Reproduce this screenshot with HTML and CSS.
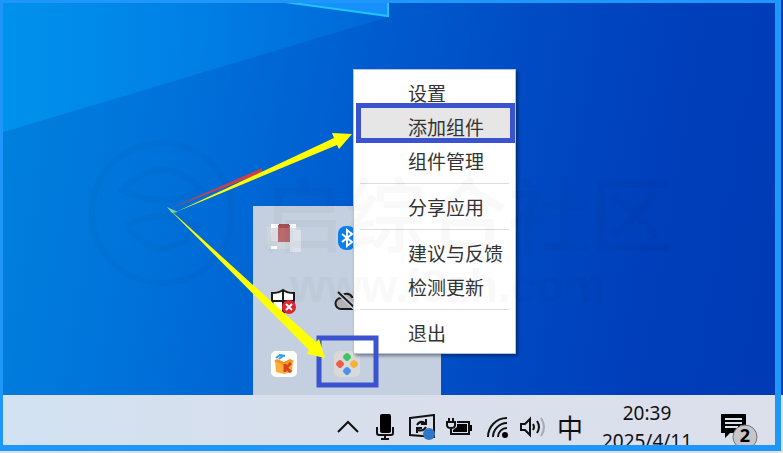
FILE: index.html
```
<!DOCTYPE html>
<html lang="zh-CN">

<head>
    <meta charset="utf-8">
    <meta name="viewport" content="width=device-width, initial-scale=1.0">
    <title>桌面</title>
    <link rel="stylesheet" href="styles.css">
</head>

<body>
    <main class="desktop">
        <svg class="wallpaper" viewBox="0 0 783 395" preserveAspectRatio="none" aria-hidden="true">
            <defs>
                <linearGradient id="beam" x1="0" y1="0" x2="1" y2="0">
                    <stop offset="0" stop-color="#0094ee" stop-opacity="0.9" />
                    <stop offset="0.5" stop-color="#0086ea" stop-opacity="0.7" />
                    <stop offset="1" stop-color="#0070e0" stop-opacity="0.5" />
                </linearGradient>
            </defs>
            <path d="M0 0H388V17L0 133Z" fill="url(#beam)" />
            <path d="M270 0L388 16V0Z" fill="#1690fb" />
            <path d="M270 0L388 16V0" fill="none" stroke="#20c4fb" stroke-width="2" />
        </svg>

        <div class="flyout">
            <button aria-label="应用">
                <svg width="36" height="32" viewBox="0 0 36 32">
                    <path d="M1 5h33v22H1z" fill="#cfd5df" />
                    <path d="M5 2h25v4H5z" fill="#fff" />
                    <path d="M5 6h8v13H5zM24 6h6v20h-6z" fill="#dde1e9" />
                    <path d="M12 3h12v17H12z" fill="#b96b6e" />
                    <path d="M13 2h10v4H13z" fill="#a84d53" />
                    <path d="M24 8h11v22H24z" fill="#dce2ec" />
                    <path d="M5 24h6v3H5z" fill="#fff" />
                </svg>
            </button>
            <button aria-label="蓝牙">
                <svg width="18" height="24" viewBox="0 0 18 24">
                    <rect width="18" height="24" rx="8" fill="#0a7fec" />
                    <path d="M4 8l10 8-5 4V4l5 4-10 8" fill="none" stroke="#fff" stroke-width="2" />
                </svg>
            </button>
            <button></button>
            <button aria-label="安全中心">
                <svg width="26" height="26" viewBox="0 0 26 26">
                    <path d="M12 2C9 4 5 5 1 5V12C1 18 5 22 12 25C19 22 23 18 23 12V5C19 5 15 4 12 2Z" fill="#fff" stroke="#1a1a1a" stroke-width="2" />
                    <path d="M12 2V25M1 13H23" stroke="#1a1a1a" stroke-width="2" />
                    <circle cx="18" cy="19" r="7" fill="#e02430" />
                    <path d="M15 16l6 6m0-6l-6 6" stroke="#fff" stroke-width="2" />
                </svg>
            </button>
            <button aria-label="云同步">
                <svg width="26" height="22" viewBox="0 0 26 22">
                    <path d="M7 19a5 5 0 0 1 0-11 6 6 0 0 1 11-1 6 6 0 0 1 2 12z" fill="#b3b3b3" stroke="#1a1a1a" stroke-width="2" />
                    <path d="M4 2l18 17" stroke="#c4cedd" stroke-width="5" />
                    <path d="M4 2l18 17" stroke="#1a1a1a" stroke-width="2" />
                </svg>
            </button>
            <button></button>
            <button aria-label="酷狗">
                <svg width="26" height="26" viewBox="0 0 26 26">
                    <rect width="26" height="26" rx="5" fill="#fff" />
                    <path d="M4 10l9 3 9-3-1 11-8 2-8-2z" fill="#fbb03c" />
                    <path d="M3 10l3-2 7 3 6-3 4 2-10 4z" fill="#f7941e" />
                    <path d="M5 7l4-3 5 1M8 8l5-4" fill="none" stroke="#2f9de4" stroke-width="2" />
                    <path d="M14 13v8M20 12l-5 5 5 4" fill="none" stroke="#d9431f" stroke-width="3" />
                </svg>
            </button>
            <button aria-label="小组件">
                <svg width="26" height="26" viewBox="0 0 26 26">
                    <rect width="26" height="26" rx="5" fill="#d9d9d9" />
                    <g stroke-linejoin="round" stroke-width="4">
                        <path d="M13 4l2 2-2 2-2-2z" fill="#3fc463" stroke="#3fc463" />
                        <path d="M6 11l2 2-2 2-2-2z" fill="#ee5a4d" stroke="#ee5a4d" />
                        <path d="M20 11l2 2-2 2-2-2z" fill="#f3b23c" stroke="#f3b23c" />
                        <path d="M13 18l2 2-2 2-2-2z" fill="#4a90ee" stroke="#4a90ee" />
                    </g>
                </svg>
            </button>
            <button></button>
        </div>

        <ul class="menu">
            <li><button>设置</button></li>
            <li><button class="active">添加组件</button></li>
            <li><button>组件管理</button></li>
            <li class="line"></li>
            <li><button>分享应用</button></li>
            <li class="line"></li>
            <li><button>建议与反馈</button></li>
            <li><button>检测更新</button></li>
            <li class="line"></li>
            <li><button>退出</button></li>
        </ul>
    </main>

    <footer class="taskbar">
        <button class="tray" aria-label="显示隐藏的图标">
            <svg width="22" height="14" viewBox="0 0 22 14">
                <path d="M1 12L11 2L21 12" fill="none" stroke="#111" stroke-width="2" />
            </svg>
        </button>
        <button class="tray" aria-label="麦克风">
            <svg width="18" height="26" viewBox="0 0 18 26">
                <rect x="4" y="0" width="11" height="19" rx="2" />
                <path d="M1 13V19Q1 21 3 21H15Q17 21 17 19V13M9 21V25M5 25H13" fill="none" stroke="#111" stroke-width="2" />
            </svg>
        </button>
        <button class="tray" aria-label="更新">
            <svg width="28" height="26" viewBox="0 0 28 26">
                <path d="M2 4L26 1V23L2 21Z" fill="none" stroke="#111" stroke-width="2" />
                <path d="M9 11Q12 6 17 9M18 5V10H13M18 13Q15 18 10 16M9 19V14H14" fill="none" stroke="#111" stroke-width="2" />
                <circle cx="21" cy="20" r="6" fill="#2f78c8" />
            </svg>
        </button>
        <button class="tray" aria-label="电池">
            <svg width="26" height="20" viewBox="0 0 26 20">
                <path d="M3 1V5M7 1V5M1 5H9V8Q9 11 5 11Q1 11 1 8ZM5 11V17H23V5H11" fill="none" stroke="#111" stroke-width="2" />
                <path d="M11 7H21V15H7V13L11 10ZM24 8H26V14H24Z" />
            </svg>
        </button>
        <button class="tray" aria-label="网络">
            <svg width="24" height="22" viewBox="-3 0 24 22">
                <g fill="none" stroke="#111" stroke-width="2">
                    <path d="M1 21C1 11 9 2 20 2" />
                    <path d="M6 21C6 14 12 7 20 7" />
                    <path d="M11 21C11 16 15 12 20 12" />
                </g>
                <circle cx="18" cy="19" r="3" />
            </svg>
        </button>
        <button class="tray" aria-label="音量">
            <svg width="28" height="22" viewBox="0 0 28 22">
                <g fill="none" stroke="#111" stroke-width="2">
                    <path d="M2 8H6L11 3V19L6 14H2Z" />
                    <path d="M14 8Q16 11 14 14M18 5Q22 11 18 17" />
                    <path d="M22 2Q28 11 22 20" stroke="#a4a9b2" />
                </g>
            </svg>
        </button>
        <button class="tray ime">中</button>
        <button class="clock">20:39<br>2025/4/11</button>
        <button class="notice" aria-label="通知">
            <svg width="38" height="40" viewBox="0 0 38 40">
                <path d="M1 7H26V26H10L5 31V26H1Z" />
                <path d="M5 12H22M5 16H22M5 20H18" stroke="#dbe0eb" stroke-width="2" />
                <circle cx="25" cy="30" r="12" fill="#c6c6c8" stroke="#737373" stroke-width="1" />
                <text x="25" y="35" text-anchor="middle">2</text>
            </svg>
        </button>
    </footer>

    <!-- faint site mark over the whole desktop -->
    <svg class="overlay mark" aria-hidden="true">
        <circle cx="162" cy="213" r="70" />
        <path d="M122 190Q162 150 202 190Q162 210 122 190ZM126 226Q162 206 198 226Q162 270 126 226" />
        <text x="262" y="246" class="mark-name">启综合社区</text>
        <text x="290" y="302" class="mark-url">www.i3zh.com</text>
    </svg>

    <!-- arrows and boxes pointing at the two steps -->
    <svg class="overlay" aria-hidden="true">
        <rect x="319" y="338" width="57" height="47" fill="none" stroke="#3b53cf" stroke-width="5" />
        <path d="M169 209L262 168V173Z" fill="#c8404c" />
        <path d="M167 207L178 212L172 213Z" fill="#7fc9a0" />
        <path d="M176 212L334 138L332 133L352 134L339 149L337 145Z" fill="#ffff00" />
        <path d="M167 207L316 342L319 339L325 358L307 354L309 350Z" fill="#ffff00" />
    </svg>
    <div class="frame"></div>
</body>

</html>
```
FILE: styles.css
```
* {
    box-sizing: border-box;
}

body {
    margin: 0;
    height: 100vh;
    display: flex;
    flex-direction: column;
    position: relative;
    overflow: hidden;
    font-family: "Noto Sans CJK SC", sans-serif;
    color: #333;
}

button {
    margin: 0;
    padding: 0;
    border: 0;
    background: none;
    font: inherit;
    color: inherit;
}

svg {
    display: block;
}

.desktop {
    flex: 1;
    position: relative;
    background: linear-gradient(100deg, #0082de 0%, #0072da 22%, #005fd0 42%, #004cc4 62%, #003eba 82%, #003ab4 100%);
}

.wallpaper {
    width: 100%;
    height: 100%;
    position: absolute;
}

/* HIDDEN ICONS */

.flyout {
    position: absolute;
    left: 253px;
    bottom: 0;
    width: 188px;
    display: grid;
    grid-template-columns: repeat(3, 1fr);
    grid-auto-rows: 63px;
    background-color: #c4cfdf;
}

.flyout button {
    display: flex;
    align-items: center;
    justify-content: center;
}

/* CONTEXT MENU */

.menu {
    position: absolute;
    left: 353px;
    top: 69px;
    width: 163px;
    margin: 0;
    padding: 6px 0 3px;
    list-style: none;
    isolation: isolate;
    background-color: #fff;
    border: 1px solid #b4c4e0;
    box-shadow: 2px 2px 3px rgba(0, 0, 0, 0.4);
}

.menu button {
    display: block;
    position: relative;
    width: 100%;
    height: 34px;
    padding-left: 54px;
    font-size: 19px;
    line-height: 32px;
    text-align: left;
}

.active::before {
    content: "";
    position: absolute;
    z-index: -1;
    inset: -7px 0 1px 2px;
    background-color: #e6e6e6;
    border: 5px solid #3b53cf;
}

.line {
    height: 1px;
    margin: 5px 6px 6px;
    background-color: #dcdcdc;
}

/* TASKBAR */

.taskbar {
    display: flex;
    align-items: center;
    justify-content: flex-end;
    gap: 7px;
    height: 58px;
    padding: 6px 14px 0 0;
    background: linear-gradient(90deg, #d2e2f2, #d8dfec 40%, #dbe0eb);
    color: #111;
}

.tray {
    width: 30px;
    display: flex;
    justify-content: center;
}

.ime {
    font-size: 26px;
    line-height: 30px;
}

.clock {
    width: 110px;
    font-family: "Noto Sans", "Noto Sans CJK SC", sans-serif;
    font-size: 19px;
    line-height: 28px;
}

.notice {
    width: 60px;
    display: flex;
    justify-content: center;
}

.notice text {
    font-family: "Noto Sans", sans-serif;
    font-size: 18px;
    font-weight: 700;
}

/* OVERLAYS */

.overlay,
.frame {
    position: absolute;
    pointer-events: none;
}

.overlay {
    inset: 0;
    width: 100%;
    height: 100%;
}

.mark {
    opacity: 0.02;
}

.mark circle,
.mark path {
    fill: none;
    stroke: #000;
    stroke-width: 6;
}

.mark-name {
    font-size: 82px;
    font-weight: 500;
}

.mark-url {
    font-family: "Liberation Sans", sans-serif;
    font-size: 46px;
    font-weight: 700;
}

.frame {
    inset: 0 2px 2px 0;
    border: 3px solid #1e96fa;
    border-right-width: 6px;
    border-bottom-width: 6px;
}
```
